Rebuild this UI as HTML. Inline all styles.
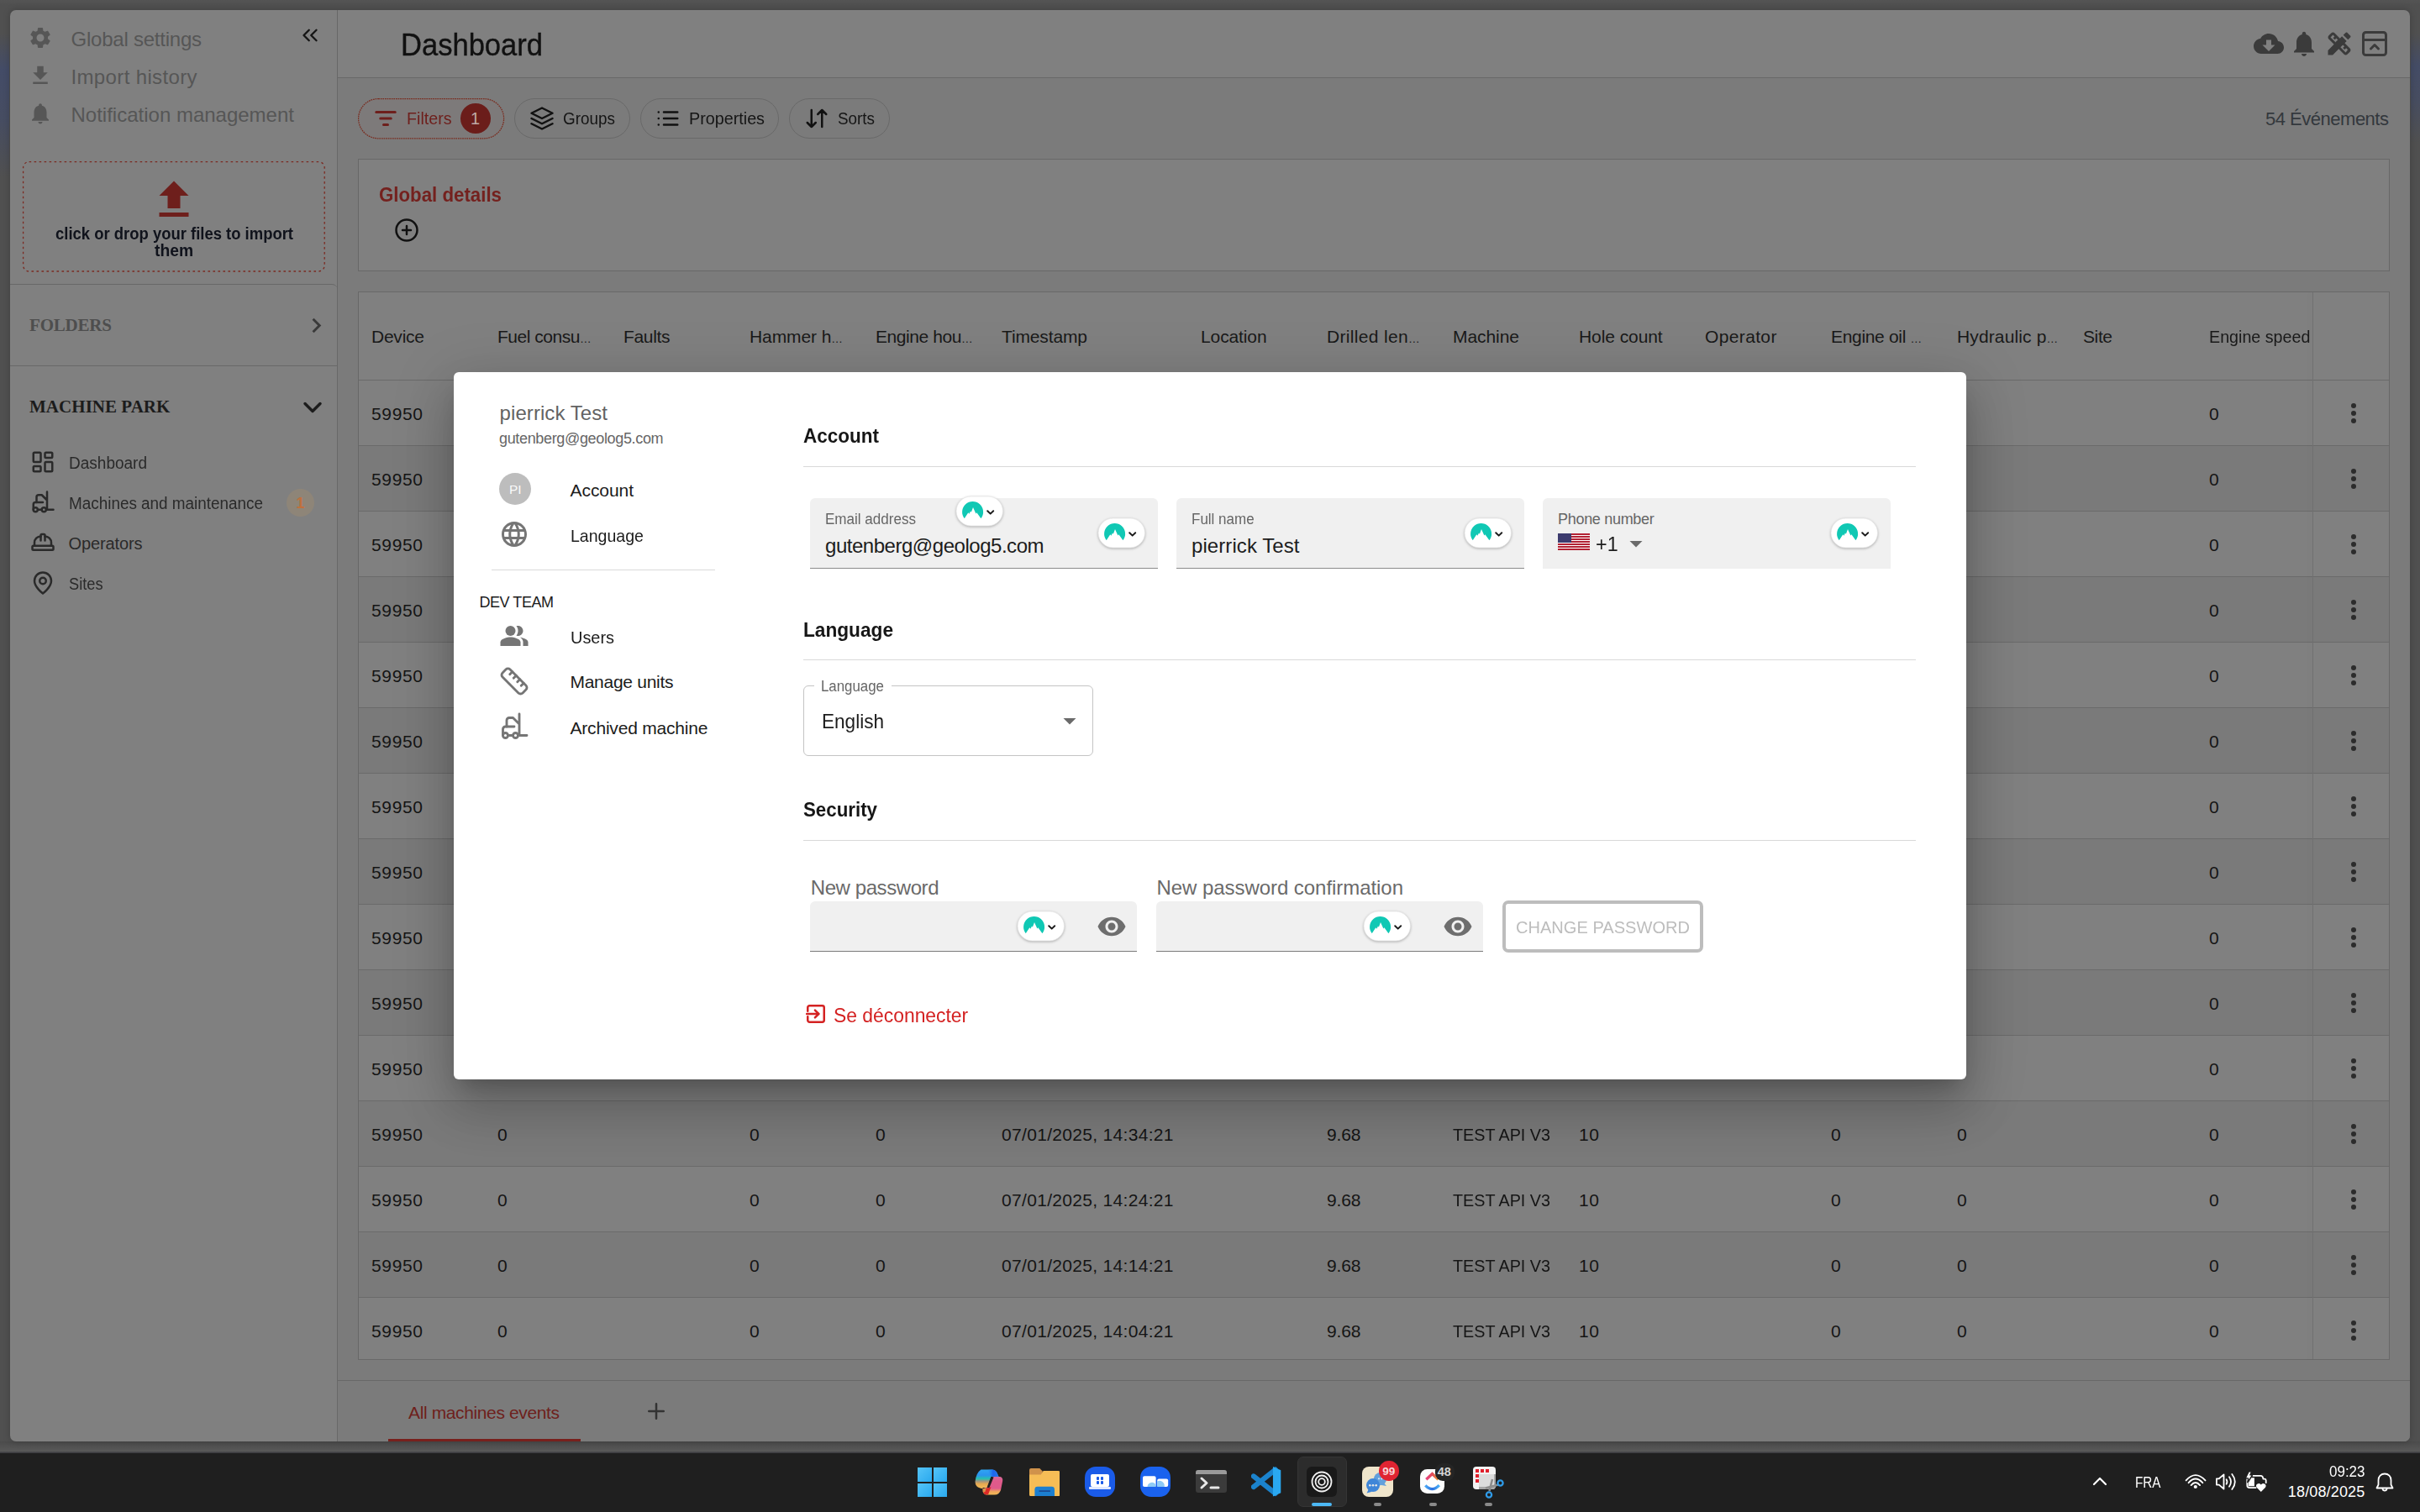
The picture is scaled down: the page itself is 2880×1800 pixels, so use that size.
<!DOCTYPE html>
<html lang="fr"><head><meta charset="utf-8"><title>Dashboard</title>
<style>
html,body{margin:0;padding:0}
body{width:2880px;height:1800px;overflow:hidden;position:relative;background:#505050;font-family:"Liberation Sans",sans-serif}
.b{position:absolute;box-sizing:border-box;display:block}
.t{position:absolute;white-space:nowrap;line-height:1}
</style></head><body>
<div class="b" style="left:0px;top:0px;width:2880px;height:6px;background:linear-gradient(#545454,#505050)"></div>
<div class="b" style="left:0px;top:1716px;width:2880px;height:14px;background:linear-gradient(#4b4b4b,#595959 85%,#3d3d41 92%)"></div>
<div class="b" style="left:0px;top:40px;width:11px;height:170px;background:linear-gradient(rgba(50,70,135,0),rgba(50,70,135,.42) 25%,rgba(50,70,135,.32) 60%,rgba(50,70,135,0))"></div>
<div class="b" style="left:2869px;top:40px;width:11px;height:130px;background:linear-gradient(rgba(50,70,135,0),rgba(50,70,135,.4) 30%,rgba(50,70,135,.3) 60%,rgba(50,70,135,0))"></div>
<div class="b" style="left:12px;top:12px;width:2856px;height:1704px;background:#808080;border-radius:7px;box-shadow:0 0 9px rgba(0,0,0,.22)"></div>
<div class="b" style="left:402px;top:93px;width:2466px;height:1623px;background:#7b7b7b;border-bottom-right-radius:7px"></div>
<div class="b" style="left:401px;top:12px;width:1px;height:1704px;background:#686868"></div>
<div class="b" style="left:402px;top:92px;width:2466px;height:1px;background:#686868"></div>
<svg class="b" style="left:33px;top:30px;" width="30" height="30" viewBox="0 0 24 24" fill="#565656" stroke="none" stroke-width="2" stroke-linecap="round" stroke-linejoin="round"><path d="M19.14 12.94c.04-.3.06-.61.06-.94 0-.32-.02-.64-.07-.94l2.03-1.58c.18-.14.23-.41.12-.61l-1.92-3.32c-.12-.22-.37-.29-.59-.22l-2.39.96c-.5-.38-1.03-.7-1.62-.94l-.36-2.54c-.04-.24-.24-.41-.48-.41h-3.84c-.24 0-.43.17-.47.41l-.36 2.54c-.59.24-1.13.57-1.62.94l-2.39-.96c-.22-.08-.47 0-.59.22L2.74 8.87c-.12.21-.08.47.12.61l2.03 1.58c-.05.3-.09.63-.09.94s.02.64.07.94l-2.03 1.58c-.18.14-.23.41-.12.61l1.92 3.32c.12.22.37.29.59.22l2.39-.96c.5.38 1.03.7 1.62.94l.36 2.54c.05.24.24.41.48.41h3.84c.24 0 .44-.17.47-.41l.36-2.54c.59-.24 1.13-.56 1.62-.94l2.39.96c.22.08.47 0 .59-.22l1.92-3.32c.12-.22.07-.47-.12-.61l-2.01-1.58zM12 15.6c-1.98 0-3.6-1.62-3.6-3.6s1.62-3.6 3.6-3.6 3.6 1.62 3.6 3.6-1.62 3.6-3.6 3.6z"/></svg>
<svg class="b" style="left:33px;top:75px;" width="30" height="30" viewBox="0 0 24 24" fill="#565656" stroke="none" stroke-width="2" stroke-linecap="round" stroke-linejoin="round"><path d="M19 9h-4V3H9v6H5l7 7 7-7zM5 18v2h14v-2H5z"/></svg>
<svg class="b" style="left:33px;top:120px;" width="30" height="30" viewBox="0 0 24 24" fill="#565656" stroke="none" stroke-width="2" stroke-linecap="round" stroke-linejoin="round"><path d="M12 22c1.1 0 2-.9 2-2h-4c0 1.1.89 2 2 2zm6-6v-5c0-3.07-1.64-5.64-4.5-6.32V4c0-.83-.67-1.5-1.5-1.5s-1.5.67-1.5 1.5v.68C7.63 5.36 6 7.92 6 11v5l-2 2v1h16v-1l-2-2z"/></svg>
<div class="t" style="left:84.5px;top:34.5px;font-size:24px;color:#565656;letter-spacing:-0.232px;">Global settings</div>
<div class="t" style="left:84.5px;top:79.7px;font-size:24px;color:#565656;letter-spacing:0.356px;">Import history</div>
<div class="t" style="left:84.5px;top:124.7px;font-size:24px;color:#565656;">Notification management</div>
<svg class="b" style="left:354.2px;top:26.8px;" width="30" height="30" viewBox="0 0 24 24" fill="none" stroke="#151515" stroke-width="1.9" stroke-linecap="round" stroke-linejoin="round"><path d="m11 17-5-5 5-5"/><path d="m18 17-5-5 5-5"/></svg>
<svg class="b" style="left:26px;top:191px" width="362" height="133"><rect x="1.6" y="1.6" width="358.6" height="130.4" rx="7" fill="none" stroke="#7b2a21" stroke-width="1.3" stroke-dasharray="2.6 3.4"/></svg>
<svg class="b" style="left:177.2px;top:208.1px;" width="60" height="60" viewBox="0 0 24 24" fill="#6e1f1c" stroke="none" stroke-width="2" stroke-linecap="round" stroke-linejoin="round"><path d="M9 16h6v-6h4l-7-7-7 7h4zm-4 2h14v2H5z"/></svg>
<div class="t" style="left:65.5px;top:267.7px;font-size:20px;color:#10131c;font-weight:700;transform:scaleX(0.9227);transform-origin:0 50%;">click or drop your files to import</div>
<div class="t" style="left:184.0px;top:287.5px;font-size:20px;color:#10131c;font-weight:700;transform:scaleX(0.9627);transform-origin:0 50%;">them</div>
<div class="b" style="left:12px;top:338px;width:390px;height:1378px;border-top:1px solid #686868;border-radius:0 7px 0 7px"></div>
<div class="b" style="left:12px;top:435px;width:389px;height:1px;background:#686868"></div>
<div class="t" style="left:35.0px;top:376.5px;font-size:21px;color:#4e4e4e;font-family:Liberation Serif,serif;font-weight:700;letter-spacing:-0.198px;">FOLDERS</div>
<svg class="b" style="left:359px;top:369.8px;" width="35" height="35" viewBox="0 0 24 24" fill="#3a3a3a" stroke="none" stroke-width="2" stroke-linecap="round" stroke-linejoin="round"><path d="M10 6 8.59 7.41 13.17 12l-4.58 4.59L10 18l6-6z"/></svg>
<div class="t" style="left:35.0px;top:473.7px;font-size:21px;color:#1c1c1c;font-family:Liberation Serif,serif;font-weight:700;letter-spacing:0.035px;">MACHINE PARK</div>
<svg class="b" style="left:353.8px;top:467px;" width="36" height="36" viewBox="0 0 24 24" fill="none" stroke="#1c1c1c" stroke-width="2.3" stroke-linecap="round" stroke-linejoin="round"><path d="m6 9 6 6 6-6"/></svg>
<svg class="b" style="left:36px;top:535px;" width="30" height="30" viewBox="0 0 24 24" fill="none" stroke="#2a2a2a" stroke-width="2" stroke-linecap="round" stroke-linejoin="round"><rect x="3" y="3" width="7" height="9" rx="1"/><rect x="14" y="3" width="7" height="5" rx="1"/><rect x="14" y="12" width="7" height="9" rx="1"/><rect x="3" y="16" width="7" height="5" rx="1"/></svg>
<svg class="b" style="left:36px;top:582.5px;" width="30" height="30" viewBox="0 0 24 24" fill="none" stroke="#2a2a2a" stroke-width="2" stroke-linecap="round" stroke-linejoin="round"><path d="M12 12H5a2 2 0 0 0-2 2v5"/><circle cx="13" cy="19" r="2"/><circle cx="5" cy="19" r="2"/><path d="M8 19h3m5-17v17h6M6 12V7c0-1.1.9-2 2-2h3l5 5"/></svg>
<svg class="b" style="left:36px;top:630.5px;" width="30" height="30" viewBox="0 0 24 24" fill="none" stroke="#2a2a2a" stroke-width="2" stroke-linecap="round" stroke-linejoin="round"><path d="M2 18a1 1 0 0 0 1 1h18a1 1 0 0 0 1-1v-2a1 1 0 0 0-1-1H3a1 1 0 0 0-1 1v2z"/><path d="M10 10V5a1 1 0 0 1 1-1h2a1 1 0 0 1 1 1v5"/><path d="M4 15v-3a6 6 0 0 1 6-6"/><path d="M14 6a6 6 0 0 1 6 6v3"/></svg>
<svg class="b" style="left:36px;top:679px;" width="30" height="30" viewBox="0 0 24 24" fill="none" stroke="#2a2a2a" stroke-width="2" stroke-linecap="round" stroke-linejoin="round"><path d="M20 10c0 6-8 12-8 12s-8-6-8-12a8 8 0 0 1 16 0Z"/><circle cx="12" cy="10" r="3"/></svg>
<div class="t" style="left:81.5px;top:540.9px;font-size:20px;color:#2a2a2a;transform:scaleX(0.9505);transform-origin:0 50%;">Dashboard</div>
<div class="t" style="left:81.5px;top:589.0px;font-size:20px;color:#2a2a2a;transform:scaleX(0.9444);transform-origin:0 50%;">Machines and maintenance</div>
<div class="t" style="left:81.5px;top:636.7px;font-size:20px;color:#2a2a2a;letter-spacing:-0.116px;">Operators</div>
<div class="t" style="left:81.5px;top:684.7px;font-size:20px;color:#2a2a2a;transform:scaleX(0.9109);transform-origin:0 50%;">Sites</div>
<div class="b" style="left:341px;top:582px;width:33px;height:33px;background:#8e8578;border-radius:50%"></div>
<div class="t" style="left:352.5px;top:589.7px;font-size:18px;color:#c0703c;font-weight:700;">1</div>
<div class="t" style="left:477.0px;top:36.0px;font-size:36px;color:#111;transform:scaleX(0.9596);transform-origin:0 50%;-webkit-text-stroke:.35px #111;">Dashboard</div>
<svg class="b" style="left:2682px;top:34px;" width="36" height="36" viewBox="0 0 24 24" fill="#3b3b3b" stroke="none" stroke-width="2" stroke-linecap="round" stroke-linejoin="round"><path d="M19.35 10.04C18.67 6.59 15.64 4 12 4 9.11 4 6.6 5.64 5.35 8.04 2.34 8.36 0 10.91 0 14c0 3.31 2.69 6 6 6h13c2.76 0 5-2.24 5-5 0-2.64-2.05-4.78-4.65-4.96zM17 13l-5 5-5-5h3V9h4v4h3z"/></svg>
<svg class="b" style="left:2724px;top:34px;" width="36" height="36" viewBox="0 0 24 24" fill="#3b3b3b" stroke="none" stroke-width="2" stroke-linecap="round" stroke-linejoin="round"><path d="M12 22c1.1 0 2-.9 2-2h-4c0 1.1.89 2 2 2zm6-6v-5c0-3.07-1.64-5.64-4.5-6.32V4c0-.83-.67-1.5-1.5-1.5s-1.5.67-1.5 1.5v.68C7.63 5.36 6 7.92 6 11v5l-2 2v1h16v-1l-2-2z"/></svg>
<svg class="b" style="left:2766px;top:34px;" width="36" height="36" viewBox="0 0 24 24" fill="#3b3b3b" stroke="none" stroke-width="2" stroke-linecap="round" stroke-linejoin="round"><path d="M16.24 11.51l1.57-1.57-3.75-3.75-1.57 1.57-4.14-4.13c-.78-.78-2.05-.78-2.83 0l-1.9 1.9c-.78.78-.78 2.05 0 2.83l4.13 4.13L3 17.25V21h3.75l4.76-4.76 4.13 4.13c.95.95 2.23.6 2.83 0l1.9-1.9c.78-.78.78-2.05 0-2.83l-4.13-4.13zm-7.06-.44L5.04 6.94l1.89-1.9L8.2 6.31 7.02 7.5l1.41 1.41 1.19-1.19 1.2 1.2-1.64 1.65zm7.88 7.89l-4.13-4.13 1.9-1.9 1.2 1.2-1.19 1.19 1.41 1.41 1.19-1.19 1.27 1.27-1.65 2.15zM20.71 7.04c.39-.39.39-1.02 0-1.41l-2.34-2.34c-.47-.47-1.12-.29-1.41 0l-1.83 1.83 3.75 3.75 1.83-1.83z"/></svg>
<svg class="b" style="left:2808px;top:34px;" width="36" height="36" viewBox="0 0 24 24" fill="none" stroke="#3b3b3b" stroke-width="2" stroke-linecap="round" stroke-linejoin="round"><rect x="3" y="3" width="18" height="18" rx="2"/><path d="M3 9h18"/><path d="m9 16 3-3 3 3"/></svg>
<svg class="b" style="left:425px;top:116px" width="177" height="51"><rect x="1.6" y="1.6" width="173" height="47.2" rx="23.6" fill="#7d7a7a" stroke="#7a2c1f" stroke-width="1.25" stroke-dasharray="1.7 .9"/></svg>
<div class="b" style="left:612px;top:117px;width:138px;height:48px;border:1px solid #696969;border-radius:24px;"></div>
<div class="b" style="left:762px;top:117px;width:165px;height:48px;border:1px solid #696969;border-radius:24px;"></div>
<div class="b" style="left:939px;top:117px;width:119.5px;height:48px;border:1px solid #696969;border-radius:24px;"></div>
<svg class="b" style="left:444px;top:125.8px;" width="30" height="30" viewBox="0 0 24 24" fill="none" stroke="#6e1f1c" stroke-width="2.4" stroke-linecap="round" stroke-linejoin="round"><path d="M3 6h18M7 12h10M10 18h4"/></svg>
<div class="t" style="left:483.7px;top:129.8px;font-size:21px;color:#6e1f1c;transform:scaleX(0.9376);transform-origin:0 50%;">Filters</div>
<div class="b" style="left:548px;top:123px;width:35.5px;height:35.5px;background:#6b1d1a;border-radius:50%"></div>
<div class="t" style="left:560.1px;top:131.2px;font-size:20px;color:#bfa9a7;">1</div>
<svg class="b" style="left:630px;top:126px;" width="30" height="30" viewBox="0 0 24 24" fill="none" stroke="#111" stroke-width="2" stroke-linecap="round" stroke-linejoin="round"><polygon points="12 2 2 7 12 12 22 7 12 2"/><polyline points="2 17 12 22 22 17"/><polyline points="2 12 12 17 22 12"/></svg>
<div class="t" style="left:670.0px;top:129.8px;font-size:21px;color:#151515;transform:scaleX(0.8974);transform-origin:0 50%;">Groups</div>
<svg class="b" style="left:779.6px;top:126px;" width="30" height="30" viewBox="0 0 24 24" fill="none" stroke="#111" stroke-width="2" stroke-linecap="round" stroke-linejoin="round"><path d="M8 6h13M8 12h13M8 18h13M3 6h.01M3 12h.01M3 18h.01"/></svg>
<div class="t" style="left:819.8px;top:129.8px;font-size:21px;color:#151515;transform:scaleX(0.9403);transform-origin:0 50%;">Properties</div>
<svg class="b" style="left:957px;top:126px;" width="30" height="30" viewBox="0 0 24 24" fill="none" stroke="#111" stroke-width="2" stroke-linecap="round" stroke-linejoin="round"><path d="m3 16 4 4 4-4M7 20V4M21 8l-4-4-4 4M17 4v16"/></svg>
<div class="t" style="left:996.5px;top:129.8px;font-size:21px;color:#151515;transform:scaleX(0.8977);transform-origin:0 50%;">Sorts</div>
<div class="t" style="left:2696.0px;top:130.5px;font-size:22px;color:#33383d;letter-spacing:-0.490px;">54 Événements</div>
<div class="b" style="left:426px;top:189px;width:2418px;height:134px;background:#808080;border:1px solid #686868"></div>
<div class="t" style="left:451.3px;top:220.7px;font-size:23.5px;color:#74211e;font-weight:700;transform:scaleX(0.9474);transform-origin:0 50%;">Global details</div>
<svg class="b" style="left:469px;top:258.8px;" width="30" height="30" viewBox="0 0 24 24" fill="none" stroke="#111" stroke-width="2" stroke-linecap="round" stroke-linejoin="round"><circle cx="12" cy="12" r="10"/><path d="M8 12h8M12 8v8"/></svg>
<div class="b" style="left:426px;top:347px;width:2418px;height:1272px;background:#808080;border:1px solid #686868;overflow:hidden">
<div class="b" style="left:0;top:104px;width:2418px;height:78px;background:#808080;border-top:1px solid #6a6a6a"></div>
<div class="b" style="left:0;top:182px;width:2418px;height:78px;background:#7a7a7a;border-top:1px solid #6a6a6a"></div>
<div class="b" style="left:0;top:260px;width:2418px;height:78px;background:#808080;border-top:1px solid #6a6a6a"></div>
<div class="b" style="left:0;top:338px;width:2418px;height:78px;background:#7a7a7a;border-top:1px solid #6a6a6a"></div>
<div class="b" style="left:0;top:416px;width:2418px;height:78px;background:#808080;border-top:1px solid #6a6a6a"></div>
<div class="b" style="left:0;top:494px;width:2418px;height:78px;background:#7a7a7a;border-top:1px solid #6a6a6a"></div>
<div class="b" style="left:0;top:572px;width:2418px;height:78px;background:#808080;border-top:1px solid #6a6a6a"></div>
<div class="b" style="left:0;top:650px;width:2418px;height:78px;background:#7a7a7a;border-top:1px solid #6a6a6a"></div>
<div class="b" style="left:0;top:728px;width:2418px;height:78px;background:#808080;border-top:1px solid #6a6a6a"></div>
<div class="b" style="left:0;top:806px;width:2418px;height:78px;background:#7a7a7a;border-top:1px solid #6a6a6a"></div>
<div class="b" style="left:0;top:884px;width:2418px;height:78px;background:#808080;border-top:1px solid #6a6a6a"></div>
<div class="b" style="left:0;top:962px;width:2418px;height:78px;background:#7a7a7a;border-top:1px solid #6a6a6a"></div>
<div class="b" style="left:0;top:1040px;width:2418px;height:78px;background:#808080;border-top:1px solid #6a6a6a"></div>
<div class="b" style="left:0;top:1118px;width:2418px;height:78px;background:#7a7a7a;border-top:1px solid #6a6a6a"></div>
<div class="b" style="left:0;top:1196px;width:2418px;height:78px;background:#808080;border-top:1px solid #6a6a6a"></div>
<div class="b" style="left:2325px;top:0;width:1px;height:1272px;background:#707070;box-shadow:-3px 0 4px rgba(0,0,0,.06)"></div>
</div>
<div class="t" style="left:442.0px;top:390.0px;font-size:21px;color:#191919;letter-spacing:-0.238px;">Device</div>
<div class="t" style="left:592.0px;top:390.0px;font-size:21px;color:#191919;letter-spacing:-0.486px;">Fuel consu<span style="font-size:.65em;letter-spacing:0">…</span></div>
<div class="t" style="left:742.0px;top:390.0px;font-size:21px;color:#191919;letter-spacing:-0.317px;">Faults</div>
<div class="t" style="left:892.0px;top:390.0px;font-size:21px;color:#191919;letter-spacing:-0.096px;">Hammer h<span style="font-size:.65em;letter-spacing:0">…</span></div>
<div class="t" style="left:1042.0px;top:390.0px;font-size:21px;color:#191919;letter-spacing:-0.435px;">Engine hou<span style="font-size:.65em;letter-spacing:0">…</span></div>
<div class="t" style="left:1192.0px;top:390.0px;font-size:21px;color:#191919;letter-spacing:-0.135px;">Timestamp</div>
<div class="t" style="left:1429.0px;top:390.0px;font-size:21px;color:#191919;letter-spacing:-0.114px;">Location</div>
<div class="t" style="left:1579.0px;top:390.0px;font-size:21px;color:#191919;letter-spacing:0.337px;">Drilled len<span style="font-size:.65em;letter-spacing:0">…</span></div>
<div class="t" style="left:1729.0px;top:390.0px;font-size:21px;color:#191919;letter-spacing:-0.063px;">Machine</div>
<div class="t" style="left:1879.0px;top:390.0px;font-size:21px;color:#191919;letter-spacing:-0.078px;">Hole count</div>
<div class="t" style="left:2029.0px;top:390.0px;font-size:21px;color:#191919;letter-spacing:0.361px;">Operator</div>
<div class="t" style="left:2179.0px;top:390.0px;font-size:21px;color:#191919;letter-spacing:-0.322px;">Engine oil <span style="font-size:.65em;letter-spacing:0">…</span></div>
<div class="t" style="left:2329.0px;top:390.0px;font-size:21px;color:#191919;letter-spacing:0.131px;">Hydraulic p<span style="font-size:.65em;letter-spacing:0">…</span></div>
<div class="t" style="left:2479.0px;top:390.0px;font-size:21px;color:#191919;letter-spacing:-0.396px;">Site</div>
<div class="t" style="left:2629.0px;top:390.0px;font-size:21px;color:#191919;transform:scaleX(0.9374);transform-origin:0 50%;">Engine speed</div>
<div class="t" style="left:442.0px;top:481.5px;font-size:21px;color:#151515;letter-spacing:0.650px;">59950</div>
<div class="t" style="left:2629.0px;top:481.5px;font-size:21px;color:#151515;">0</div>
<svg class="b" style="left:2786px;top:477.1px;" width="30" height="30" viewBox="0 0 24 24" fill="#2c2c2c" stroke="none" stroke-width="2" stroke-linecap="round" stroke-linejoin="round"><circle cx="12" cy="4.8" r="2.4"/><circle cx="12" cy="12" r="2.4"/><circle cx="12" cy="19.2" r="2.4"/></svg>
<div class="t" style="left:442.0px;top:559.5px;font-size:21px;color:#151515;letter-spacing:0.650px;">59950</div>
<div class="t" style="left:2629.0px;top:559.5px;font-size:21px;color:#151515;">0</div>
<svg class="b" style="left:2786px;top:555.1px;" width="30" height="30" viewBox="0 0 24 24" fill="#2c2c2c" stroke="none" stroke-width="2" stroke-linecap="round" stroke-linejoin="round"><circle cx="12" cy="4.8" r="2.4"/><circle cx="12" cy="12" r="2.4"/><circle cx="12" cy="19.2" r="2.4"/></svg>
<div class="t" style="left:442.0px;top:637.5px;font-size:21px;color:#151515;letter-spacing:0.650px;">59950</div>
<div class="t" style="left:2629.0px;top:637.5px;font-size:21px;color:#151515;">0</div>
<svg class="b" style="left:2786px;top:633.1px;" width="30" height="30" viewBox="0 0 24 24" fill="#2c2c2c" stroke="none" stroke-width="2" stroke-linecap="round" stroke-linejoin="round"><circle cx="12" cy="4.8" r="2.4"/><circle cx="12" cy="12" r="2.4"/><circle cx="12" cy="19.2" r="2.4"/></svg>
<div class="t" style="left:442.0px;top:715.5px;font-size:21px;color:#151515;letter-spacing:0.650px;">59950</div>
<div class="t" style="left:2629.0px;top:715.5px;font-size:21px;color:#151515;">0</div>
<svg class="b" style="left:2786px;top:711.1px;" width="30" height="30" viewBox="0 0 24 24" fill="#2c2c2c" stroke="none" stroke-width="2" stroke-linecap="round" stroke-linejoin="round"><circle cx="12" cy="4.8" r="2.4"/><circle cx="12" cy="12" r="2.4"/><circle cx="12" cy="19.2" r="2.4"/></svg>
<div class="t" style="left:442.0px;top:793.5px;font-size:21px;color:#151515;letter-spacing:0.650px;">59950</div>
<div class="t" style="left:2629.0px;top:793.5px;font-size:21px;color:#151515;">0</div>
<svg class="b" style="left:2786px;top:789.1px;" width="30" height="30" viewBox="0 0 24 24" fill="#2c2c2c" stroke="none" stroke-width="2" stroke-linecap="round" stroke-linejoin="round"><circle cx="12" cy="4.8" r="2.4"/><circle cx="12" cy="12" r="2.4"/><circle cx="12" cy="19.2" r="2.4"/></svg>
<div class="t" style="left:442.0px;top:871.5px;font-size:21px;color:#151515;letter-spacing:0.650px;">59950</div>
<div class="t" style="left:2629.0px;top:871.5px;font-size:21px;color:#151515;">0</div>
<svg class="b" style="left:2786px;top:867.1px;" width="30" height="30" viewBox="0 0 24 24" fill="#2c2c2c" stroke="none" stroke-width="2" stroke-linecap="round" stroke-linejoin="round"><circle cx="12" cy="4.8" r="2.4"/><circle cx="12" cy="12" r="2.4"/><circle cx="12" cy="19.2" r="2.4"/></svg>
<div class="t" style="left:442.0px;top:949.5px;font-size:21px;color:#151515;letter-spacing:0.650px;">59950</div>
<div class="t" style="left:2629.0px;top:949.5px;font-size:21px;color:#151515;">0</div>
<svg class="b" style="left:2786px;top:945.1px;" width="30" height="30" viewBox="0 0 24 24" fill="#2c2c2c" stroke="none" stroke-width="2" stroke-linecap="round" stroke-linejoin="round"><circle cx="12" cy="4.8" r="2.4"/><circle cx="12" cy="12" r="2.4"/><circle cx="12" cy="19.2" r="2.4"/></svg>
<div class="t" style="left:442.0px;top:1027.5px;font-size:21px;color:#151515;letter-spacing:0.650px;">59950</div>
<div class="t" style="left:2629.0px;top:1027.5px;font-size:21px;color:#151515;">0</div>
<svg class="b" style="left:2786px;top:1023.1px;" width="30" height="30" viewBox="0 0 24 24" fill="#2c2c2c" stroke="none" stroke-width="2" stroke-linecap="round" stroke-linejoin="round"><circle cx="12" cy="4.8" r="2.4"/><circle cx="12" cy="12" r="2.4"/><circle cx="12" cy="19.2" r="2.4"/></svg>
<div class="t" style="left:442.0px;top:1105.5px;font-size:21px;color:#151515;letter-spacing:0.650px;">59950</div>
<div class="t" style="left:2629.0px;top:1105.5px;font-size:21px;color:#151515;">0</div>
<svg class="b" style="left:2786px;top:1101.1px;" width="30" height="30" viewBox="0 0 24 24" fill="#2c2c2c" stroke="none" stroke-width="2" stroke-linecap="round" stroke-linejoin="round"><circle cx="12" cy="4.8" r="2.4"/><circle cx="12" cy="12" r="2.4"/><circle cx="12" cy="19.2" r="2.4"/></svg>
<div class="t" style="left:442.0px;top:1183.5px;font-size:21px;color:#151515;letter-spacing:0.650px;">59950</div>
<div class="t" style="left:2629.0px;top:1183.5px;font-size:21px;color:#151515;">0</div>
<svg class="b" style="left:2786px;top:1179.1px;" width="30" height="30" viewBox="0 0 24 24" fill="#2c2c2c" stroke="none" stroke-width="2" stroke-linecap="round" stroke-linejoin="round"><circle cx="12" cy="4.8" r="2.4"/><circle cx="12" cy="12" r="2.4"/><circle cx="12" cy="19.2" r="2.4"/></svg>
<div class="t" style="left:442.0px;top:1261.5px;font-size:21px;color:#151515;letter-spacing:0.650px;">59950</div>
<div class="t" style="left:2629.0px;top:1261.5px;font-size:21px;color:#151515;">0</div>
<svg class="b" style="left:2786px;top:1257.1px;" width="30" height="30" viewBox="0 0 24 24" fill="#2c2c2c" stroke="none" stroke-width="2" stroke-linecap="round" stroke-linejoin="round"><circle cx="12" cy="4.8" r="2.4"/><circle cx="12" cy="12" r="2.4"/><circle cx="12" cy="19.2" r="2.4"/></svg>
<div class="t" style="left:442.0px;top:1339.5px;font-size:21px;color:#151515;letter-spacing:0.650px;">59950</div>
<div class="t" style="left:2629.0px;top:1339.5px;font-size:21px;color:#151515;">0</div>
<svg class="b" style="left:2786px;top:1335.1px;" width="30" height="30" viewBox="0 0 24 24" fill="#2c2c2c" stroke="none" stroke-width="2" stroke-linecap="round" stroke-linejoin="round"><circle cx="12" cy="4.8" r="2.4"/><circle cx="12" cy="12" r="2.4"/><circle cx="12" cy="19.2" r="2.4"/></svg>
<div class="t" style="left:592.0px;top:1339.5px;font-size:21px;color:#151515;">0</div>
<div class="t" style="left:892.0px;top:1339.5px;font-size:21px;color:#151515;">0</div>
<div class="t" style="left:1042.0px;top:1339.5px;font-size:21px;color:#151515;">0</div>
<div class="t" style="left:1192.0px;top:1339.5px;font-size:21px;color:#151515;letter-spacing:0.315px;">07/01/2025, 14:34:21</div>
<div class="t" style="left:1579.0px;top:1339.5px;font-size:21px;color:#151515;letter-spacing:-0.124px;">9.68</div>
<div class="t" style="left:1729.0px;top:1339.5px;font-size:21px;color:#151515;transform:scaleX(0.9405);transform-origin:0 50%;">TEST API V3</div>
<div class="t" style="left:1879.0px;top:1339.5px;font-size:21px;color:#151515;letter-spacing:0.641px;">10</div>
<div class="t" style="left:2179.0px;top:1339.5px;font-size:21px;color:#151515;">0</div>
<div class="t" style="left:2329.0px;top:1339.5px;font-size:21px;color:#151515;">0</div>
<div class="t" style="left:442.0px;top:1417.5px;font-size:21px;color:#151515;letter-spacing:0.650px;">59950</div>
<div class="t" style="left:2629.0px;top:1417.5px;font-size:21px;color:#151515;">0</div>
<svg class="b" style="left:2786px;top:1413.1px;" width="30" height="30" viewBox="0 0 24 24" fill="#2c2c2c" stroke="none" stroke-width="2" stroke-linecap="round" stroke-linejoin="round"><circle cx="12" cy="4.8" r="2.4"/><circle cx="12" cy="12" r="2.4"/><circle cx="12" cy="19.2" r="2.4"/></svg>
<div class="t" style="left:592.0px;top:1417.5px;font-size:21px;color:#151515;">0</div>
<div class="t" style="left:892.0px;top:1417.5px;font-size:21px;color:#151515;">0</div>
<div class="t" style="left:1042.0px;top:1417.5px;font-size:21px;color:#151515;">0</div>
<div class="t" style="left:1192.0px;top:1417.5px;font-size:21px;color:#151515;letter-spacing:0.315px;">07/01/2025, 14:24:21</div>
<div class="t" style="left:1579.0px;top:1417.5px;font-size:21px;color:#151515;letter-spacing:-0.124px;">9.68</div>
<div class="t" style="left:1729.0px;top:1417.5px;font-size:21px;color:#151515;transform:scaleX(0.9405);transform-origin:0 50%;">TEST API V3</div>
<div class="t" style="left:1879.0px;top:1417.5px;font-size:21px;color:#151515;letter-spacing:0.641px;">10</div>
<div class="t" style="left:2179.0px;top:1417.5px;font-size:21px;color:#151515;">0</div>
<div class="t" style="left:2329.0px;top:1417.5px;font-size:21px;color:#151515;">0</div>
<div class="t" style="left:442.0px;top:1495.5px;font-size:21px;color:#151515;letter-spacing:0.650px;">59950</div>
<div class="t" style="left:2629.0px;top:1495.5px;font-size:21px;color:#151515;">0</div>
<svg class="b" style="left:2786px;top:1491.1px;" width="30" height="30" viewBox="0 0 24 24" fill="#2c2c2c" stroke="none" stroke-width="2" stroke-linecap="round" stroke-linejoin="round"><circle cx="12" cy="4.8" r="2.4"/><circle cx="12" cy="12" r="2.4"/><circle cx="12" cy="19.2" r="2.4"/></svg>
<div class="t" style="left:592.0px;top:1495.5px;font-size:21px;color:#151515;">0</div>
<div class="t" style="left:892.0px;top:1495.5px;font-size:21px;color:#151515;">0</div>
<div class="t" style="left:1042.0px;top:1495.5px;font-size:21px;color:#151515;">0</div>
<div class="t" style="left:1192.0px;top:1495.5px;font-size:21px;color:#151515;letter-spacing:0.315px;">07/01/2025, 14:14:21</div>
<div class="t" style="left:1579.0px;top:1495.5px;font-size:21px;color:#151515;letter-spacing:-0.124px;">9.68</div>
<div class="t" style="left:1729.0px;top:1495.5px;font-size:21px;color:#151515;transform:scaleX(0.9405);transform-origin:0 50%;">TEST API V3</div>
<div class="t" style="left:1879.0px;top:1495.5px;font-size:21px;color:#151515;letter-spacing:0.641px;">10</div>
<div class="t" style="left:2179.0px;top:1495.5px;font-size:21px;color:#151515;">0</div>
<div class="t" style="left:2329.0px;top:1495.5px;font-size:21px;color:#151515;">0</div>
<div class="t" style="left:442.0px;top:1573.5px;font-size:21px;color:#151515;letter-spacing:0.650px;">59950</div>
<div class="t" style="left:2629.0px;top:1573.5px;font-size:21px;color:#151515;">0</div>
<svg class="b" style="left:2786px;top:1569.1px;" width="30" height="30" viewBox="0 0 24 24" fill="#2c2c2c" stroke="none" stroke-width="2" stroke-linecap="round" stroke-linejoin="round"><circle cx="12" cy="4.8" r="2.4"/><circle cx="12" cy="12" r="2.4"/><circle cx="12" cy="19.2" r="2.4"/></svg>
<div class="t" style="left:592.0px;top:1573.5px;font-size:21px;color:#151515;">0</div>
<div class="t" style="left:892.0px;top:1573.5px;font-size:21px;color:#151515;">0</div>
<div class="t" style="left:1042.0px;top:1573.5px;font-size:21px;color:#151515;">0</div>
<div class="t" style="left:1192.0px;top:1573.5px;font-size:21px;color:#151515;letter-spacing:0.315px;">07/01/2025, 14:04:21</div>
<div class="t" style="left:1579.0px;top:1573.5px;font-size:21px;color:#151515;letter-spacing:-0.124px;">9.68</div>
<div class="t" style="left:1729.0px;top:1573.5px;font-size:21px;color:#151515;transform:scaleX(0.9405);transform-origin:0 50%;">TEST API V3</div>
<div class="t" style="left:1879.0px;top:1573.5px;font-size:21px;color:#151515;letter-spacing:0.641px;">10</div>
<div class="t" style="left:2179.0px;top:1573.5px;font-size:21px;color:#151515;">0</div>
<div class="t" style="left:2329.0px;top:1573.5px;font-size:21px;color:#151515;">0</div>
<div class="b" style="left:402px;top:1643px;width:2466px;height:1px;background:#686868"></div>
<div class="t" style="left:486.0px;top:1671.2px;font-size:21px;color:#6e1f1c;letter-spacing:-0.376px;">All machines events</div>
<div class="b" style="left:462px;top:1712.5px;width:229px;height:3.5px;background:#78201c"></div>
<svg class="b" style="left:766px;top:1665px;" width="30" height="30" viewBox="0 0 24 24" fill="none" stroke="#333" stroke-width="2" stroke-linecap="round" stroke-linejoin="round"><path d="M5 12h14M12 5v14"/></svg>
<div class="b" style="left:0px;top:1730px;width:2880px;height:70px;background:#1f1f1f"></div>
<div class="b" style="left:1092px;top:1747px;width:16.5px;height:16.5px;background:linear-gradient(135deg,#55c4f8,#2aa9ee)"></div>
<div class="b" style="left:1110.5px;top:1747px;width:16.5px;height:16.5px;background:linear-gradient(135deg,#55c4f8,#2aa9ee)"></div>
<div class="b" style="left:1092px;top:1765.5px;width:16.5px;height:16.5px;background:linear-gradient(135deg,#55c4f8,#2aa9ee)"></div>
<div class="b" style="left:1110.5px;top:1765.5px;width:16.5px;height:16.5px;background:linear-gradient(135deg,#55c4f8,#2aa9ee)"></div>
<svg class="b" style="left:1160px;top:1748.5px" width="34" height="31" viewBox="0 0 34 31"><defs><linearGradient id="cg1" x1="0" y1="0" x2="0" y2="1"><stop offset="0" stop-color="#2fa6f3"/><stop offset=".3" stop-color="#2b93ee"/><stop offset=".48" stop-color="#27c0ae"/><stop offset=".6" stop-color="#9a9383"/><stop offset=".75" stop-color="#e6a951"/><stop offset="1" stop-color="#f3bd5a"/></linearGradient><linearGradient id="cg2" x1="0" y1="0" x2="1" y2="0"><stop offset="0" stop-color="#2b8ff0" stop-opacity="0"/><stop offset=".5" stop-color="#1d66ee"/><stop offset="1" stop-color="#2a74e8"/></linearGradient><linearGradient id="cg3" x1="0" y1="0" x2="0" y2="1"><stop offset="0" stop-color="#d86a9a"/><stop offset=".25" stop-color="#df5a8b"/><stop offset=".65" stop-color="#df5a8b"/><stop offset=".82" stop-color="#eea55c"/><stop offset="1" stop-color="#f2b854"/></linearGradient></defs><path d="M7.500 .500H21Q25.500 1 27 5.500L28.500 9H19.500L14.500 22H9.500V23.200Q2.500 22.500 1 18L.500 15Q1.500 4.500 7.500 .500Z" fill="url(#cg1)"/><path d="M15 .500H21Q25.500 1 27 5.500L28.500 9H19.500L17 4Z" fill="url(#cg2)"/><path d="M22 9H30Q33.800 9.800 33.200 14L31 25Q29 30.500 23.500 30.500H14Q10.500 30 9.500 26.500V23.200L14.500 22L19 12Z" fill="url(#cg3)"/><path d="M10 27.500 12 30.300 16 30.300 19.500 21 16 22.500 13.500 22.300Z" fill="#dc2a27"/><path d="M9.500 23.200 14 22.200 12.500 26.500 10.500 28Z" fill="#d89448"/><path d="M19.300 9.500H22.600L17.300 22.300L14.600 22Z" fill="#1f1f1f"/></svg>
<svg class="b" style="left:1224.700px;top:1747.600px" width="36.400" height="33.200" viewBox="0 0 37 33.500" preserveAspectRatio="none"><path d="M0 2a2 2 0 0 1 2-2h10.500l3.500 3.500V8H0z" fill="#d0924b"/><path d="M0 7.500 14 7.500 17 3H35a2 2 0 0 1 2 2V31.500a2 2 0 0 1-2 2H2a2 2 0 0 1-2-2z" fill="#f6bd56"/><path d="M6.500 33.500V25.500a3.500 3.500 0 0 1 3.500-3.500H27a3.500 3.500 0 0 1 3.500 3.500v8z" fill="#1c7fd0"/><rect x="11.500" y="26.500" width="14" height="1.700" rx=".8" fill="#1b4b94"/></svg>
<div class="b" style="left:1291px;top:1746px;width:36px;height:36px;background:#1a5be8;border-radius:13px"></div>
<div class="b" style="left:1298px;top:1755px;width:22px;height:15px;background:#fff;border-radius:2px"></div>
<div class="b" style="left:1296px;top:1770px;width:26px;height:2.5px;background:#dfe8ff;border-radius:1px"></div>
<div class="b" style="left:1304.5px;top:1758px;width:3.6px;height:3.6px;background:#1a5be8;border-radius:1px"></div>
<div class="b" style="left:1309.5px;top:1758px;width:3.6px;height:3.6px;background:#1a5be8;border-radius:1px"></div>
<div class="b" style="left:1304.5px;top:1763px;width:3.6px;height:3.6px;background:#1a5be8;border-radius:1px"></div>
<div class="b" style="left:1309.5px;top:1763px;width:3.6px;height:3.6px;background:#1a5be8;border-radius:1px"></div>
<div class="b" style="left:1357px;top:1746px;width:36px;height:36px;background:#1a62ee;border-radius:13px"></div>
<svg class="b" style="left:1357px;top:1746px" width="36" height="36" viewBox="0 0 36 36"><rect x="3" y="11.200" width="15.600" height="12.700" rx="2" fill="#fff"/><rect x="20.200" y="14.500" width="13" height="9.400" rx="2" fill="#fff"/><path d="M8.500 23.900a5.500 5.500 0 0 1 10.100-2.500V23.900z" fill="#8fcbf6"/><path d="M20.200 17.500a6 6 0 0 1 8.500 6.400H20.200z" fill="#8fcbf6"/></svg>
<div class="b" style="left:1423px;top:1750px;width:36.5px;height:27px;background:#3b3b3b;border-radius:3px"></div>
<div class="b" style="left:1423px;top:1750px;width:36.5px;height:5px;background:#9a9a9a;border-radius:3px 3px 0 0"></div>
<svg class="b" style="left:1427px;top:1757px" width="30" height="18" viewBox="0 0 30 18" fill="none" stroke="#e8e8e8" stroke-width="3" stroke-linecap="round" stroke-linejoin="round"><path d="M3 3l6 5.5-6 5.5"/><path d="M14 14h9"/></svg>
<svg class="b" style="left:1489px;top:1746.300px" width="36" height="35.500" viewBox="0 0 100 100" preserveAspectRatio="none"><path d="M80 10 8 68" stroke="#1b83cd" stroke-width="17" stroke-linecap="round"/><path d="M80 90 8 32" stroke="#1b83cd" stroke-width="17" stroke-linecap="round"/><path d="M72 0 98 12V88L72 100Z" fill="#2aa8f1"/></svg>
<div class="b" style="left:1544px;top:1734px;width:59px;height:60px;background:#2c2c2c;border-radius:7px;border:1px solid #353535"></div>
<div class="b" style="left:1555px;top:1746px;width:36px;height:36px;background:#191919;border-radius:6px"></div>
<svg class="b" style="left:1555px;top:1746px" width="36" height="36" viewBox="0 0 36 36" fill="none" stroke="#f2f2f2" stroke-width="1.8"><circle cx="18" cy="18" r="11.5"/><circle cx="18" cy="18" r="7.5"/><circle cx="18" cy="18" r="3.8"/></svg>
<div class="b" style="left:1561px;top:1788.5px;width:24px;height:4.3px;background:#4cb8f5;border-radius:2.200px"></div>
<div class="b" style="left:1621px;top:1746px;width:36.5px;height:36px;background:#efe5cb;border-radius:8px"></div>
<svg class="b" style="left:1621px;top:1746px" width="37" height="36" viewBox="0 0 37 36"><circle cx="21.600" cy="14.600" r="7.600" fill="#62a0dc"/><path d="M26 19.500l3 3.500-6-1z" fill="#62a0dc"/><circle cx="13" cy="22.100" r="8" fill="#3f86d8"/><path d="M7.500 27.500 5.500 31.500 12 29.800z" fill="#3f86d8"/><circle cx="9.300" cy="22.300" r="1.300" fill="#e8e8e8"/><circle cx="13" cy="22.300" r="1.300" fill="#e8e8e8"/><circle cx="16.700" cy="22.300" r="1.300" fill="#e8e8e8"/><circle cx="20" cy="14.300" r="1.100" fill="#dfe8f2"/><circle cx="23.300" cy="14.300" r="1.100" fill="#dfe8f2"/></svg>
<div class="b" style="left:1641px;top:1739.1px;width:23.6px;height:23.6px;background:#e02432;border-radius:50%"></div>
<div class="t" style="left:1645.3px;top:1744.6px;font-size:13.5px;color:#f7d4d8;font-weight:700;">99</div>
<div class="b" style="left:1635px;top:1788.5px;width:8.6px;height:4.3px;background:#8a8a8a;border-radius:2.200px"></div>
<div class="b" style="left:1690.4px;top:1749.3px;width:29px;height:29px;background:#fdfdfd;border-radius:8.500px"></div>
<svg class="b" style="left:1690.400px;top:1749.300px" width="29" height="29" viewBox="0 0 29 29" fill="none" stroke-linecap="butt" stroke-linejoin="miter"><defs><linearGradient id="cu1" x1="0" y1="0" x2="1" y2="0"><stop offset="0" stop-color="#e8457f"/><stop offset=".5" stop-color="#e04a5a"/><stop offset="1" stop-color="#f0a030"/></linearGradient><linearGradient id="cu2" x1="0" y1="0" x2="1" y2="0"><stop offset="0" stop-color="#4aa8f5"/><stop offset=".5" stop-color="#2a6fe0"/><stop offset="1" stop-color="#4ab0f5"/></linearGradient></defs><path d="M7.300 12.300 14.500 5.600 21.700 12.300" stroke="url(#cu1)" stroke-width="3.400"/><path d="M6.300 19.400Q14.500 28 22.800 19.200" stroke="url(#cu2)" stroke-width="3.400"/></svg>
<div class="b" style="left:1707.5px;top:1741.5px;width:23px;height:21px;background:#252525;border-radius:9px"></div>
<div class="t" style="left:1710.8px;top:1745.1px;font-size:14.5px;color:#d4d4d4;font-weight:700;">48</div>
<div class="b" style="left:1701px;top:1788.5px;width:8.6px;height:4.3px;background:#8a8a8a;border-radius:2.200px"></div>
<div class="b" style="left:1753.2px;top:1746px;width:27px;height:27px;background:#f3f3f3;border-radius:4px"></div>
<div class="b" style="left:1760px;top:1754.5px;width:20.2px;height:18.5px;background:#a6a6a6;border-radius:0 0 4px 0"></div>
<div class="b" style="left:1760px;top:1754.5px;width:17.5px;height:15.8px;background:#dcdcdc"></div>
<div class="b" style="left:1756.4px;top:1749.2px;width:3.8px;height:3.8px;background:#e0202c"></div>
<div class="b" style="left:1762.3px;top:1749.2px;width:3.8px;height:3.8px;background:#e0202c"></div>
<div class="b" style="left:1768.2px;top:1749.2px;width:3.8px;height:3.8px;background:#e0202c"></div>
<div class="b" style="left:1756.4px;top:1755.1px;width:3.8px;height:3.8px;background:#e0202c"></div>
<div class="b" style="left:1756.4px;top:1761px;width:3.8px;height:3.8px;background:#e0202c"></div>
<svg class="b" style="left:1764px;top:1758px" width="28" height="28" viewBox="0 0 28 28" fill="none" stroke="#2f9be8" stroke-width="2.300"><path d="M19 9.500 4 13.500M8.500 17 12 3" stroke="#8c8c8c" stroke-width="2.600"/><circle cx="21.500" cy="7.500" r="3.100"/><circle cx="8" cy="21.500" r="3.100"/></svg>
<div class="b" style="left:1767px;top:1788.5px;width:8.6px;height:4.3px;background:#8a8a8a;border-radius:2.200px"></div>
<svg class="b" style="left:2489px;top:1755px" width="20" height="16" viewBox="0 0 20 16" fill="none" stroke="#fff" stroke-width="2.2" stroke-linecap="round" stroke-linejoin="round"><path d="M3 12l7-7 7 7"/></svg>
<div class="t" style="left:2541.0px;top:1756.3px;font-size:18.5px;color:#fff;transform:scaleX(0.8243);transform-origin:0 50%;">FRA</div>
<svg class="b" style="left:2600px;top:1753px" width="27" height="21" viewBox="0 0 27 21" fill="none" stroke="#fff" stroke-width="1.900" stroke-linecap="round"><path d="M1.600 9.400Q12.800-3.200 24.500 9.400"/><path d="M4.600 12.200Q12.800 2.800 21.300 12.200"/><path d="M7.600 15.100Q12.800 8.800 18.100 15.100"/><circle cx="12.800" cy="17" r="2.100" fill="#fff" stroke="none"/></svg>
<svg class="b" style="left:2636px;top:1753px" width="27" height="23" viewBox="0 0 27 23" fill="none" stroke="#fff" stroke-width="1.800" stroke-linecap="round" stroke-linejoin="round"><path d="M1.900 7.300H4.800L10.500 2.400V19.500L4.800 14.600H1.900Z"/><path d="M13.600 8.200Q15.300 11 13.600 13.800"/><path d="M17 5.300Q21 11 17 16.700"/><path d="M20.300 2Q27.300 11 20.300 20"/></svg>
<svg class="b" style="left:2672px;top:1751px" width="27" height="26" viewBox="0 0 27 26" fill="none" stroke="#fff" stroke-width="1.800" stroke-linejoin="round" stroke-linecap="round"><path d="M9.500 5.900H18.500Q20.800 6 21.200 8.500L21.500 9.700H23.200Q24.700 9.800 24.700 11.300V14.200"/><path d="M2.300 10V17.300Q2.300 20.200 5.200 20.200H12.500"/><path d="M7.300 8.300H10.900V18.200H3.600V14.500Z" fill="#fff" stroke="none"/><path d="M4.300 .900H7.400L5.700 4.900H8.500L2.500 13.800 3.600 8.900H.300Z" fill="#fff" stroke="#1f1f1f" stroke-width="1.100"/><path d="M18.800 25 13.600 19.800a3 3 0 0 1 5.200-3.200 3 3 0 0 1 5.200 3.200Z" fill="#fff" stroke="none"/></svg>
<div class="t" style="left:2771.8px;top:1742.7px;font-size:18px;color:#fff;transform:scaleX(0.9434);transform-origin:0 50%;">09:23</div>
<div class="t" style="left:2722.8px;top:1767.4px;font-size:18px;color:#fff;letter-spacing:0.156px;">18/08/2025</div>
<svg class="b" style="left:2826px;top:1752px" width="24" height="26" viewBox="0 0 24 26" fill="none" stroke="#fff" stroke-width="1.800" stroke-linejoin="round" stroke-linecap="round"><path d="M12 2.500c-4.500 0-7.500 3.300-7.500 7.500v5.500L2.500 19.500h19L19.500 15.500V10c0-4.200-3-7.500-7.500-7.500z"/><path d="M9.500 20.500c.500 2.700 4.500 2.700 5 0"/></svg>
<div class="b" style="left:540px;top:442.8px;width:1800px;height:842px;background:#fff;border-radius:6px;box-shadow:0 16px 22px -10px rgba(0,0,0,.2),0 36px 57px 4px rgba(0,0,0,.14),0 13px 69px 12px rgba(0,0,0,.12)"></div>
<div class="t" style="left:594.6px;top:479.6px;font-size:24px;color:#636363;letter-spacing:0.067px;">pierrick Test</div>
<div class="t" style="left:594.0px;top:512.8px;font-size:18px;color:#666;letter-spacing:-0.341px;">gutenberg@geolog5.com</div>
<div class="b" style="left:594px;top:563px;width:38px;height:38px;background:#bdbdbd;border-radius:50%"></div>
<div class="t" style="left:606.0px;top:574.6px;font-size:15.5px;color:#fafafa;">PI</div>
<div class="t" style="left:678.5px;top:572.5px;font-size:21px;color:#1c1c1c;letter-spacing:-0.063px;">Account</div>
<svg class="b" style="left:594px;top:618px;" width="36" height="36" viewBox="0 0 24 24" fill="#757575" stroke="none" stroke-width="2" stroke-linecap="round" stroke-linejoin="round"><path d="M11.99 2C6.47 2 2 6.48 2 12s4.47 10 9.99 10C17.52 22 22 17.52 22 12S17.52 2 11.99 2zm6.93 6h-2.95c-.32-1.25-.78-2.45-1.38-3.56 1.84.63 3.37 1.91 4.33 3.56zM12 4.04c.83 1.2 1.48 2.53 1.91 3.96h-3.82c.43-1.43 1.08-2.76 1.91-3.96zM4.26 14C4.1 13.36 4 12.69 4 12s.1-1.36.26-2h3.38c-.08.66-.14 1.32-.14 2 0 .68.06 1.34.14 2H4.26zm.82 2h2.95c.32 1.25.78 2.45 1.38 3.56-1.84-.63-3.37-1.9-4.33-3.56zm2.95-8H5.08c.96-1.66 2.49-2.93 4.33-3.56C8.81 5.55 8.35 6.75 8.03 8zM12 19.96c-.83-1.2-1.48-2.53-1.91-3.96h3.82c-.43 1.43-1.08 2.76-1.91 3.96zM14.34 14H9.66c-.09-.66-.16-1.32-.16-2 0-.68.07-1.35.16-2h4.68c.09.65.16 1.32.16 2 0 .68-.07 1.34-.16 2zm.25 5.56c.6-1.11 1.06-2.31 1.38-3.56h2.95c-.96 1.65-2.49 2.93-4.33 3.56zM16.36 14c.08-.66.14-1.32.14-2 0-.68-.06-1.34-.14-2h3.38c.16.64.26 1.31.26 2s-.1 1.36-.26 2h-3.38z"/></svg>
<div class="t" style="left:678.5px;top:627.3px;font-size:21px;color:#1c1c1c;transform:scaleX(0.9311);transform-origin:0 50%;">Language</div>
<div class="b" style="left:585px;top:678px;width:266px;height:1.2px;background:#d9d9d9"></div>
<div class="t" style="left:570.5px;top:708.0px;font-size:18px;color:#1c1c1c;letter-spacing:-0.456px;">DEV TEAM</div>
<svg class="b" style="left:594px;top:738.9px;" width="36" height="36" viewBox="0 0 24 24" fill="#757575" stroke="none" stroke-width="2" stroke-linecap="round" stroke-linejoin="round"><path d="M16.67 13.13C18.04 14.06 19 15.32 19 17v3h4v-3c0-2.18-3.57-3.47-6.33-3.87z"/><circle cx="9" cy="8" r="4"/><path d="M15 12c2.21 0 4-1.79 4-4s-1.79-4-4-4c-.47 0-.91.1-1.33.24C14.5 5.27 15 6.58 15 8s-.5 2.73-1.33 3.76c.42.14.86.24 1.33.24z"/><path d="M9 13c-2.67 0-8 1.34-8 4v3h16v-3c0-2.66-5.33-4-8-4z"/></svg>
<div class="t" style="left:678.5px;top:748.0px;font-size:21px;color:#1c1c1c;transform:scaleX(0.9482);transform-origin:0 50%;">Users</div>
<svg class="b" style="left:594px;top:793.1px;" width="36" height="36" viewBox="0 0 24 24" fill="none" stroke="#757575" stroke-width="1.9" stroke-linecap="round" stroke-linejoin="round"><path d="M21.3 15.3a2.4 2.4 0 0 1 0 3.4l-2.6 2.6a2.4 2.4 0 0 1-3.4 0L2.7 8.7a2.41 2.41 0 0 1 0-3.4l2.6-2.6a2.41 2.41 0 0 1 3.4 0Z"/><path d="m14.5 12.5 2-2"/><path d="m11.5 9.5 2-2"/><path d="m8.5 6.5 2-2"/><path d="m17.5 15.5 2-2"/></svg>
<div class="t" style="left:678.5px;top:801.3px;font-size:21px;color:#1c1c1c;letter-spacing:-0.281px;">Manage units</div>
<svg class="b" style="left:593.9px;top:847px;" width="36" height="36" viewBox="0 0 24 24" fill="none" stroke="#757575" stroke-width="1.9" stroke-linecap="round" stroke-linejoin="round"><path d="M12 12H5a2 2 0 0 0-2 2v5"/><circle cx="13" cy="19" r="2"/><circle cx="5" cy="19" r="2"/><path d="M8 19h3m5-17v17h6M6 12V7c0-1.1.9-2 2-2h3l5 5"/></svg>
<div class="t" style="left:678.5px;top:855.5px;font-size:21px;color:#1c1c1c;letter-spacing:-0.195px;">Archived machine</div>
<div class="t" style="left:956.0px;top:507.0px;font-size:24px;color:#161616;font-weight:700;transform:scaleX(0.9375);transform-origin:0 50%;">Account</div>
<div class="b" style="left:956px;top:555px;width:1324px;height:1.2px;background:#d9d9d9"></div>
<div class="t" style="left:956.0px;top:738.0px;font-size:24px;color:#161616;font-weight:700;transform:scaleX(0.9440);transform-origin:0 50%;">Language</div>
<div class="b" style="left:956px;top:785px;width:1324px;height:1.2px;background:#d9d9d9"></div>
<div class="t" style="left:956.0px;top:952.3px;font-size:24px;color:#161616;font-weight:700;transform:scaleX(0.9291);transform-origin:0 50%;">Security</div>
<div class="b" style="left:956px;top:1000px;width:1324px;height:1.2px;background:#d9d9d9"></div>
<div class="b" style="left:964px;top:593px;width:414px;height:83.5px;background:#f0f0f0;border-radius:6px 6px 0 0;border-bottom:1.5px solid #8a8a8a"></div>
<div class="t" style="left:982.0px;top:609.0px;font-size:18px;color:#666;transform:scaleX(0.9469);transform-origin:0 50%;">Email address</div>
<div class="t" style="left:982.0px;top:637.7px;font-size:24px;color:#1c1c1c;letter-spacing:-0.469px;">gutenberg@geolog5.com</div>
<div class="b" style="left:1400px;top:593px;width:414px;height:83.5px;background:#f0f0f0;border-radius:6px 6px 0 0;border-bottom:1.5px solid #8a8a8a"></div>
<div class="t" style="left:1418.0px;top:609.0px;font-size:18px;color:#666;transform:scaleX(0.9438);transform-origin:0 50%;">Full name</div>
<div class="t" style="left:1418.0px;top:637.7px;font-size:24px;color:#1c1c1c;letter-spacing:0.076px;">pierrick Test</div>
<div class="b" style="left:1836px;top:593px;width:414px;height:83.5px;background:#f0f0f0;border-radius:6px 6px 0 0;"></div>
<div class="t" style="left:1854.0px;top:609.0px;font-size:18px;color:#666;letter-spacing:-0.299px;">Phone number</div>
<svg class="b" style="left:1137.7px;top:591.1px;overflow:visible;filter:drop-shadow(0 1px 1.500px rgba(0,0,0,.28))" width="55.500" height="35" viewBox="0 0 55.500 35"><rect x="0" y="0" width="55.500" height="35" rx="17.500" fill="#fff" stroke="#e4e4e4" stroke-width=".7"/><path d="M9.600 26A12.500 12.500 0 1 1 29.600 26Z" fill="#10c8b4"/><path d="M9.200 27 14.300 19.300 15.400 20.800 17 17.400 17.900 18.700 20 13 23.400 20.400 24.400 19.300 30 27Z" fill="#fff"/><path d="M37.200 17.200 40.700 20.600 44.200 17.200" fill="none" stroke="#1c1c1c" stroke-width="2" stroke-linecap="round" stroke-linejoin="round"/></svg>
<svg class="b" style="left:1306.6px;top:617.3px;overflow:visible;filter:drop-shadow(0 1px 1.500px rgba(0,0,0,.28))" width="55.500" height="35" viewBox="0 0 55.500 35"><rect x="0" y="0" width="55.500" height="35" rx="17.500" fill="#fff" stroke="#e4e4e4" stroke-width=".7"/><path d="M9.600 26A12.500 12.500 0 1 1 29.600 26Z" fill="#10c8b4"/><path d="M9.200 27 14.300 19.300 15.400 20.800 17 17.400 17.900 18.700 20 13 23.400 20.400 24.400 19.300 30 27Z" fill="#fff"/><path d="M37.200 17.200 40.700 20.600 44.200 17.200" fill="none" stroke="#1c1c1c" stroke-width="2" stroke-linecap="round" stroke-linejoin="round"/></svg>
<svg class="b" style="left:1742.7px;top:617.3px;overflow:visible;filter:drop-shadow(0 1px 1.500px rgba(0,0,0,.28))" width="55.500" height="35" viewBox="0 0 55.500 35"><rect x="0" y="0" width="55.500" height="35" rx="17.500" fill="#fff" stroke="#e4e4e4" stroke-width=".7"/><path d="M9.600 26A12.500 12.500 0 1 1 29.600 26Z" fill="#10c8b4"/><path d="M9.200 27 14.300 19.300 15.400 20.800 17 17.400 17.900 18.700 20 13 23.400 20.400 24.400 19.300 30 27Z" fill="#fff"/><path d="M37.200 17.200 40.700 20.600 44.200 17.200" fill="none" stroke="#1c1c1c" stroke-width="2" stroke-linecap="round" stroke-linejoin="round"/></svg>
<svg class="b" style="left:2178.9px;top:617.3px;overflow:visible;filter:drop-shadow(0 1px 1.500px rgba(0,0,0,.28))" width="55.500" height="35" viewBox="0 0 55.500 35"><rect x="0" y="0" width="55.500" height="35" rx="17.500" fill="#fff" stroke="#e4e4e4" stroke-width=".7"/><path d="M9.600 26A12.500 12.500 0 1 1 29.600 26Z" fill="#10c8b4"/><path d="M9.200 27 14.300 19.300 15.400 20.800 17 17.400 17.900 18.700 20 13 23.400 20.400 24.400 19.300 30 27Z" fill="#fff"/><path d="M37.200 17.200 40.700 20.600 44.200 17.200" fill="none" stroke="#1c1c1c" stroke-width="2" stroke-linecap="round" stroke-linejoin="round"/></svg>
<div class="b" style="left:1854px;top:635px;width:38px;height:20px;background:repeating-linear-gradient(#b22234 0,#b22234 1.540px,#fff 1.540px,#fff 3.080px)"><div class="b" style="left:0;top:0;width:15.500px;height:10.800px;background:#3c3b6e"></div></div>
<div class="t" style="left:1899.0px;top:636.0px;font-size:24.5px;color:#1c1c1c;transform:scaleX(0.9523);transform-origin:0 50%;">+1</div>
<svg class="b" style="left:1929.3px;top:629.2px;" width="36" height="36" viewBox="0 0 24 24" fill="#6a6a6a" stroke="none" stroke-width="2" stroke-linecap="round" stroke-linejoin="round"><path d="M7 10l5 5 5-5z"/></svg>
<div class="b" style="left:956px;top:816px;width:345px;height:83.5px;border:1.500px solid #c4c4c4;border-radius:6px"></div>
<div class="b" style="left:969px;top:812px;width:92px;height:8px;background:#fff"></div>
<div class="t" style="left:977.0px;top:807.7px;font-size:18px;color:#666;transform:scaleX(0.9364);transform-origin:0 50%;">Language</div>
<div class="t" style="left:978.0px;top:846.6px;font-size:24px;color:#1c1c1c;transform:scaleX(0.9401);transform-origin:0 50%;">English</div>
<svg class="b" style="left:1254.7px;top:840px;" width="36" height="36" viewBox="0 0 24 24" fill="#6a6a6a" stroke="none" stroke-width="2" stroke-linecap="round" stroke-linejoin="round"><path d="M7 10l5 5 5-5z"/></svg>
<div class="t" style="left:964.8px;top:1044.6px;font-size:24px;color:#6a6a6a;letter-spacing:-0.427px;">New password</div>
<div class="t" style="left:1376.5px;top:1044.6px;font-size:24px;color:#6a6a6a;letter-spacing:-0.054px;">New password confirmation</div>
<div class="b" style="left:964px;top:1073px;width:389px;height:59.5px;background:#f0f0f0;border-radius:6px 6px 0 0;border-bottom:1.500px solid #7a7a7a"></div>
<div class="b" style="left:1376px;top:1073px;width:389px;height:59.5px;background:#f0f0f0;border-radius:6px 6px 0 0;border-bottom:1.500px solid #7a7a7a"></div>
<svg class="b" style="left:1210.7px;top:1085.3px;overflow:visible;filter:drop-shadow(0 1px 1.500px rgba(0,0,0,.28))" width="55.500" height="35" viewBox="0 0 55.500 35"><rect x="0" y="0" width="55.500" height="35" rx="17.500" fill="#fff" stroke="#e4e4e4" stroke-width=".7"/><path d="M9.600 26A12.500 12.500 0 1 1 29.600 26Z" fill="#10c8b4"/><path d="M9.200 27 14.300 19.300 15.400 20.800 17 17.400 17.900 18.700 20 13 23.400 20.400 24.400 19.300 30 27Z" fill="#fff"/><path d="M37.200 17.200 40.700 20.600 44.200 17.200" fill="none" stroke="#1c1c1c" stroke-width="2" stroke-linecap="round" stroke-linejoin="round"/></svg>
<svg class="b" style="left:1622.7px;top:1085.3px;overflow:visible;filter:drop-shadow(0 1px 1.500px rgba(0,0,0,.28))" width="55.500" height="35" viewBox="0 0 55.500 35"><rect x="0" y="0" width="55.500" height="35" rx="17.500" fill="#fff" stroke="#e4e4e4" stroke-width=".7"/><path d="M9.600 26A12.500 12.500 0 1 1 29.600 26Z" fill="#10c8b4"/><path d="M9.200 27 14.300 19.300 15.400 20.800 17 17.400 17.900 18.700 20 13 23.400 20.400 24.400 19.300 30 27Z" fill="#fff"/><path d="M37.200 17.200 40.700 20.600 44.200 17.200" fill="none" stroke="#1c1c1c" stroke-width="2" stroke-linecap="round" stroke-linejoin="round"/></svg>
<svg class="b" style="left:1305px;top:1085px;" width="36" height="36" viewBox="0 0 24 24" fill="#6e6e6e" stroke="none" stroke-width="2" stroke-linecap="round" stroke-linejoin="round"><path d="M12 4.5C7 4.5 2.73 7.61 1 12c1.73 4.39 6 7.5 11 7.5s9.27-3.11 11-7.5c-1.73-4.39-6-7.5-11-7.5zM12 17c-2.76 0-5-2.24-5-5s2.24-5 5-5 5 2.24 5 5-2.24 5-5 5zm0-8c-1.66 0-3 1.34-3 3s1.34 3 3 3 3-1.34 3-3-1.34-3-3-3z"/></svg>
<svg class="b" style="left:1717px;top:1085px;" width="36" height="36" viewBox="0 0 24 24" fill="#6e6e6e" stroke="none" stroke-width="2" stroke-linecap="round" stroke-linejoin="round"><path d="M12 4.5C7 4.5 2.73 7.61 1 12c1.73 4.39 6 7.5 11 7.5s9.27-3.11 11-7.5c-1.73-4.39-6-7.5-11-7.5zM12 17c-2.76 0-5-2.24-5-5s2.24-5 5-5 5 2.24 5 5-2.24 5-5 5zm0-8c-1.66 0-3 1.34-3 3s1.34 3 3 3 3-1.34 3-3-1.34-3-3-3z"/></svg>
<div class="b" style="left:1788px;top:1071.5px;width:238.8px;height:62.2px;border:4px solid #bdbdbd;border-radius:7px"></div>
<div class="t" style="left:1804.0px;top:1092.7px;font-size:21px;color:#bdbdbd;transform:scaleX(0.9555);transform-origin:0 50%;">CHANGE PASSWORD</div>
<svg class="b" style="left:957.9px;top:1193.8px;" width="26" height="26" viewBox="0 0 24 24" fill="none" stroke="#d42222" stroke-width="2.3" stroke-linecap="round" stroke-linejoin="round"><path d="M3 9V5a2 2 0 0 1 2-2h14a2 2 0 0 1 2 2v14a2 2 0 0 1-2 2H5a2 2 0 0 1-2-2v-4"/><path d="M2 12h13"/><path d="m11 8 4 4-4 4"/></svg>
<div class="t" style="left:991.5px;top:1196.6px;font-size:24px;color:#d42222;transform:scaleX(0.9529);transform-origin:0 50%;">Se déconnecter</div>
</body></html>
